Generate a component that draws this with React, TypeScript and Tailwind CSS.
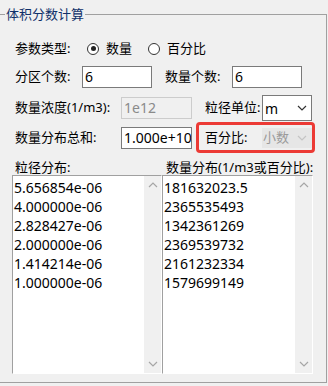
import React from "react";

const Chevron = ({ color, up = false }: { color: string; up?: boolean }) => (
  <svg width="10" height="6" viewBox="0 0 10 6" className="block">
    <polyline
      points={up ? "1,5 5,1 9,5" : "1,1 5,5 9,1"}
      fill="none"
      stroke={color}
      strokeWidth="1.2"
    />
  </svg>
);

const Radio = ({ checked }: { checked: boolean }) => (
  <span className="w-[12px] h-[12px] rounded-full border border-[#333333] bg-white flex items-center justify-center shrink-0">
    {checked && <span className="w-[5px] h-[5px] rounded-full bg-[#222222]" />}
  </span>
);

const ListBox = ({ items, w }: { items: string[]; w: string }) => (
  <div className={`${w} h-[199px] border-l border-t border-[#a0a0a0] border-r border-b border-r-white border-b-white bg-white flex`}>
    <div className="flex-1 pt-[2px] pl-[1px] overflow-hidden text-[14px]">
      {items.map((t) => (
        <div key={t} className="h-[19px] leading-[19px] whitespace-nowrap">
          {t}
        </div>
      ))}
    </div>
    <div className="w-[17px] bg-[#f0f0f0] flex flex-col items-center justify-between py-[6px]">
      <Chevron color="#a6a6a6" up />
      <Chevron color="#a6a6a6" />
    </div>
  </div>
);

export default function App() {
  return (
    <div className="w-[328px] h-[386px] bg-[#f0f0f0] overflow-hidden text-[13px] text-black [font-family:'Noto_Sans','Noto_Sans_CJK_SC',sans-serif] pt-[14px]">
      <div className="relative ml-[-1px] w-[328px] h-[369px] border border-[#a0a0a0]">
        <div className="absolute left-[5px] top-[-10px] px-[1px] bg-[#f0f0f0] leading-[18px] text-[#10306a]">
          体积分数计算
        </div>

        <div className="pl-[15px] pt-[23px]">
          {/* Row 1 */}
          <div className="h-[21px] flex items-center">
            <span className="w-[72px]">参数类型:</span>
            <Radio checked />
            <span className="ml-[7px]">数量</span>
            <span className="ml-[16px]">
              <Radio checked={false} />
            </span>
            <span className="ml-[7px]">百分比</span>
          </div>

          {/* Row 2 */}
          <div className="mt-[6px] h-[23px] flex items-center">
            <span className="w-[67px]">分区个数:</span>
            <div className="w-[70px] h-[22px] border border-[#7a7a7a] bg-white pl-[2px] leading-[20px] text-[14px]">6</div>
            <span className="ml-[13px] w-[67px]">数量个数:</span>
            <div className="w-[70px] h-[22px] border border-[#7a7a7a] bg-white pl-[2px] leading-[20px] text-[14px]">6</div>
          </div>

          {/* Row 3 */}
          <div className="mt-[6px] h-[28px] flex items-center">
            <span className="w-[106px]">数量浓度(1/m3):</span>
            <div className="w-[71px] h-[22px] border border-[#cccccc] bg-[#f0f0f0] pl-[2px] leading-[20px] text-[#8a8a8a] text-[14px]">1e12</div>
            <span className="ml-[13px] w-[57px]">粒径单位:</span>
            <div className="w-[50px] h-[26px] border border-[#7a7a7a] bg-white pl-[2px] flex items-center justify-between pr-[4px] text-[14px]">
              <span>m</span>
              <Chevron color="#333333" />
            </div>
          </div>

          {/* Row 4 */}
          <div className="mt-[1px] h-[29px] flex items-center relative">
            <span className="w-[106px]">数量分布总和:</span>
            <div className="w-[71px] h-[22px] border border-[#7a7a7a] bg-white pl-[2px] leading-[20px] overflow-hidden whitespace-nowrap text-[14px]">1.000e+10</div>
            <span className="ml-[13px] w-[57px]">百分比:</span>
            <div className="w-[50px] h-[20px] bg-[#e6e6e6] pl-[1px] flex items-center justify-between pr-[5px] text-[#9a9a9a]">
              <span>小数</span>
              <Chevron color="#c4c4c4" />
            </div>
            <div className="absolute left-[181px] top-[-1px] w-[119px] h-[31px] border-[3px] border-[#ec3a35] rounded-[4px]" />
          </div>

          {/* Label row */}
          <div className="mt-[8px] h-[15px] flex items-center">
            <span className="w-[150px]">粒径分布:</span>
            <span className="ml-[1px]">数量分布(1/m3或百分比):</span>
          </div>
        </div>

        <div className="flex pl-[12px]">
          <ListBox
            w="w-[150px]"
            items={[
              "5.656854e-06",
              "4.000000e-06",
              "2.828427e-06",
              "2.000000e-06",
              "1.414214e-06",
              "1.000000e-06",
            ]}
          />
          <ListBox
            w="w-[151px]"
            items={[
              "181632023.5",
              "2365535493",
              "1342361269",
              "2369539732",
              "2161232334",
              "1579699149",
            ]}
          />
        </div>
      </div>
    </div>
  );
}
